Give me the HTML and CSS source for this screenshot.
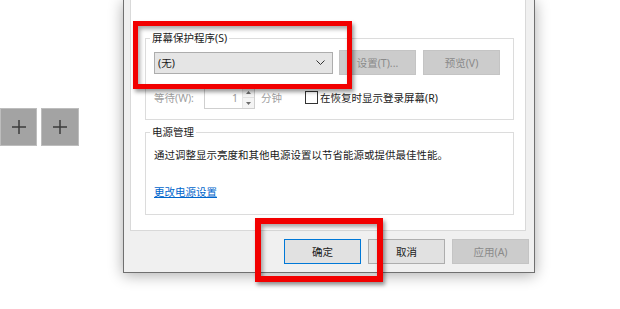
FILE: index.html
```html
<!DOCTYPE html>
<html lang="zh-CN">
<head>
<meta charset="utf-8">
<title>屏幕保护程序设置</title>
<link rel="stylesheet" href="styles.css">
</head>
<body>
<div class="desktop">
  <div class="tiles">
    <div class="tile"><svg width="14" height="14" viewBox="0 0 14 14"><path d="M7 0V14M0 7H14" stroke="#3c3c3c" stroke-width="1.5" fill="none"/></svg></div>
    <div class="tile"><svg width="14" height="14" viewBox="0 0 14 14"><path d="M7 0V14M0 7H14" stroke="#3c3c3c" stroke-width="1.5" fill="none"/></svg></div>
  </div>
  <div class="dialog">
    <div class="panel">
      <fieldset class="group group-saver">
        <legend class="legend">屏幕保护程序(S)</legend>
        <div class="row row-select">
          <div class="combo"><span>(无)</span><svg class="chev" width="9" height="5" viewBox="0 0 9 5"><path d="M0.5 0.5L4.5 4.5L8.5 0.5" stroke="#333" stroke-width="1" fill="none"/></svg></div>
          <div class="btn btn-disabled">设置(T)...</div>
          <div class="btn btn-disabled">预览(V)</div>
        </div>
        <div class="row row-wait">
          <span class="wait-label muted">等待(W):</span>
          <div class="spin">
            <span class="spin-value">1</span>
            <div class="spin-buttons">
              <div class="spin-btn"><svg width="5" height="3" viewBox="0 0 5 3"><path d="M0 3L2.5 0L5 3Z" fill="#6d6d6d"/></svg></div>
              <div class="spin-btn"><svg width="5" height="3" viewBox="0 0 5 3"><path d="M0 0L2.5 3L5 0Z" fill="#6d6d6d"/></svg></div>
            </div>
          </div>
          <span class="unit muted">分钟</span>
          <span class="check"></span>
          <span class="check-label">在恢复时显示登录屏幕(R)</span>
        </div>
      </fieldset>
      <fieldset class="group group-power">
        <legend class="legend">电源管理</legend>
        <p class="desc">通过调整显示亮度和其他电源设置以节省能源或提供最佳性能。</p>
        <a class="link" href="#">更改电源设置</a>
      </fieldset>
    </div>
    <div class="footer">
      <div class="btn btn-default">确定</div>
      <div class="btn">取消</div>
      <div class="btn btn-disabled">应用(A)</div>
    </div>
  </div>
  <div class="mark mark-saver"></div>
  <div class="mark mark-ok"></div>
</div>
</body>
</html>
```
FILE: styles.css
```css
html, body {
  margin: 0;
  padding: 0;
  background: #fff;
}
body {
  font-family: "Noto Sans", "Noto Sans CJK SC", sans-serif;
  font-size: 10.5px;
  color: #1a1a1a;
}
.desktop {
  position: relative;
  display: flex;
  width: 620px;
  height: 309px;
  overflow: hidden;
  background: #fff;
}
.tiles {
  display: flex;
  gap: 4px;
  margin-top: 108px;
  align-self: flex-start;
}
.tile {
  width: 37px;
  height: 38px;
  box-sizing: border-box;
  background: #a3a3a3;
  border: 1px solid #bdbdbd;
  display: flex;
  align-items: center;
  justify-content: center;
}
.tile + .tile {
  width: 38px;
}
.dialog {
  margin-left: 44px;
  width: 412px;
  height: 273px;
  box-sizing: border-box;
  border: 1px solid #707070;
  border-top: none;
  background: #f0f0f0;
  box-shadow: 0 2px 14px rgba(0, 0, 0, 0.33);
  display: flex;
  flex-direction: column;
  flex-shrink: 0;
}
.panel {
  margin: 0 8px 0 6px;
  height: 231px;
  box-sizing: border-box;
  background: #fff;
  border: 1px solid #d9d9d9;
  border-top: none;
  padding: 0 11px 0 14px;
  display: flex;
  flex-direction: column;
}
.group {
  margin: 0;
  padding: 0;
  border: 1px solid #dcdcdc;
  min-width: 0;
}
.legend {
  margin-left: -4px;
  padding: 0 2px;
  line-height: 15px;
  color: #1a1a1a;
}
.group-saver {
  margin-top: 31px;
  padding: 4px 0 10px 8px;
}
.group-power {
  margin-top: 5px;
  padding: 8px 0 14px 8px;
}
.row {
  display: flex;
  align-items: center;
}
.row-select {
  height: 25px;
}
.combo {
  width: 179px;
  height: 22px;
  box-sizing: border-box;
  background: #e5e5e5;
  border: 1px solid #adadad;
  display: flex;
  align-items: center;
  justify-content: space-between;
  padding: 0 7px 0 3px;
  margin-right: 6px;
}
.chev {
  display: block;
}
.btn {
  width: 77px;
  height: 25px;
  box-sizing: border-box;
  background: #e1e1e1;
  border: 1px solid #adadad;
  display: flex;
  align-items: center;
  justify-content: center;
  color: #1a1a1a;
}
.row-select .btn + .btn {
  margin-left: 7px;
}
.btn-disabled {
  background: #cccccc;
  border-color: #c4c4c4;
  color: #8a8a8a;
}
.btn-default {
  border-color: #0078d7;
}
.row-wait {
  margin-top: 11px;
  height: 23px;
}
.muted {
  color: #a0a0a0;
}
.wait-label {
  width: 50px;
}
.spin {
  width: 51px;
  height: 23px;
  box-sizing: border-box;
  border: 1px solid #cfcfcf;
  background: #fff;
  display: flex;
  align-items: center;
  justify-content: flex-end;
}
.spin-value {
  color: #9a9a9a;
  margin-right: 4px;
}
.spin-buttons {
  width: 11px;
  height: 21px;
  display: flex;
  flex-direction: column;
  border-left: 1px solid #e6e6e6;
}
.spin-btn {
  flex: 1;
  display: flex;
  align-items: center;
  justify-content: center;
  background: #f4f4f4;
}
.spin-btn + .spin-btn {
  border-top: 1px solid #e0e0e0;
}
.unit {
  margin-left: 6px;
  width: 44px;
}
.check {
  width: 13px;
  height: 13px;
  box-sizing: border-box;
  border: 1px solid #333;
  background: #fff;
}
.check-label {
  margin-left: 2px;
}
.desc {
  margin: 0;
  line-height: 15px;
}
.link {
  display: inline-block;
  margin-top: 22px;
  line-height: 15px;
  color: #0066cc;
  text-decoration: underline;
}
.footer {
  display: flex;
  justify-content: flex-end;
  gap: 7px;
  padding: 8px 5px 0 0;
}
.mark {
  position: absolute;
  box-sizing: border-box;
  border: 5px solid #f20000;
  box-shadow: 2px 3px 4px rgba(0, 0, 0, 0.4), inset 2px 3px 4px rgba(0, 0, 0, 0.35);
}
.mark-saver {
  left: 133px;
  top: 21px;
  width: 219px;
  height: 68px;
}
.mark-ok {
  left: 255px;
  top: 218px;
  width: 128px;
  height: 64px;
  border-width: 6px;
}
```
